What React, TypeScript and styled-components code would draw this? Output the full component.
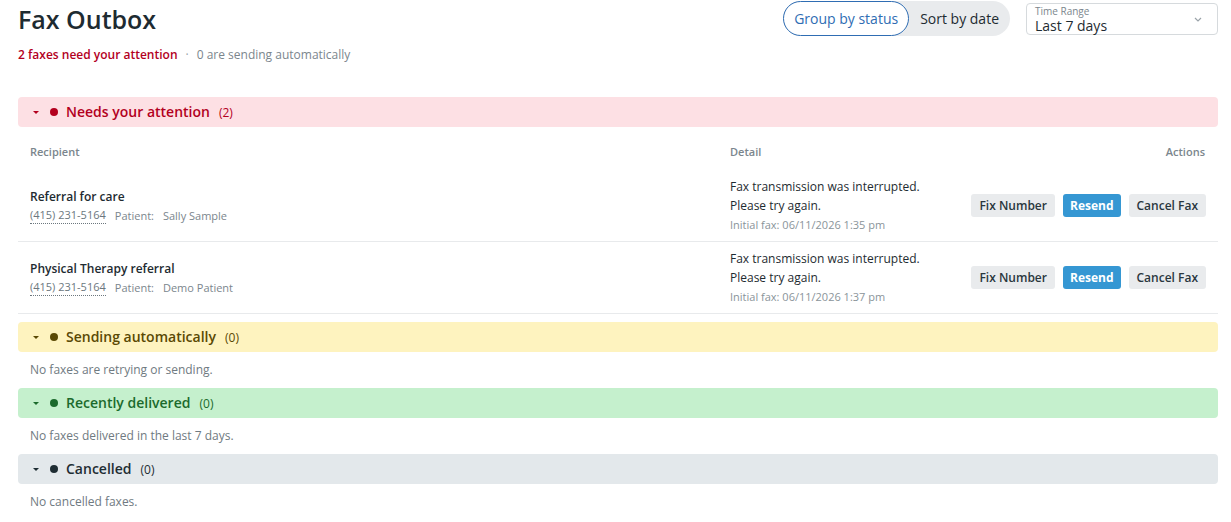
import React from "react";
import styled, { createGlobalStyle } from "styled-components";

const GlobalStyle = createGlobalStyle`
  html, body { margin: 0; padding: 0; background: #ffffff; }
  body { font-family: "Open Sans", "Liberation Sans", sans-serif; color: #1e2b31; }
  * { box-sizing: border-box; }
`;

const Page = styled.div`
  width: 1200px;
  margin-left: 18px;
`;

const Header = styled.header`
  display: flex;
  justify-content: space-between;
  align-items: flex-start;
  margin-bottom: 34px;
`;

const TitleBlock = styled.div`
  display: flex;
  flex-direction: column;
`;

const Title = styled.h1`
  margin: 1px 0 0;
  font-size: 25px;
  line-height: 36px;
  font-weight: 600;
  color: #1e2b31;
`;

const Summary = styled.div`
  margin-top: 10px;
  font-size: 12px;
  line-height: 16px;
  color: #7b868d;
  display: flex;
  align-items: center;
`;

const Alert = styled.span`
  color: #b3001e;
  font-weight: 600;
`;

const Sep = styled.span`
  margin: 0 8px;
  color: #9aa3a9;
`;

const Controls = styled.div`
  display: flex;
  align-items: flex-start;
  gap: 16px;
  padding-top: 2px;
`;

const Toggle = styled.div`
  display: flex;
  height: 35px;
  margin-top: -1px;
  background: #e9ebed;
  border-radius: 18px;
`;

const ToggleOption = styled.button<{ $active?: boolean }>`
  height: 35px;
  padding: 0 10px;
  border-radius: 18px;
  border: 1px solid ${(p) => (p.$active ? "#2f6db3" : "transparent")};
  background: ${(p) => (p.$active ? "#ffffff" : "transparent")};
  color: ${(p) => (p.$active ? "#2f6db3" : "#1e2b31")};
  font-family: inherit;
  font-size: 14px;
  cursor: pointer;
`;

const Select = styled.div`
  width: 192px;
  height: 32px;
  margin-top: 1px;
  border: 1px solid #d6dadd;
  border-radius: 4px;
  padding: 0 8px;
  display: flex;
  align-items: center;
  justify-content: space-between;
`;

const SelectText = styled.div`
  display: flex;
  flex-direction: column;
`;

const SelectLabel = styled.span`
  font-size: 10px;
  line-height: 12px;
  color: #7b868d;
`;

const SelectValue = styled.span`
  font-size: 14px;
  line-height: 17px;
  color: #1e2b31;
`;

const Chevron = styled.svg`
  margin-right: 7px;
`;

const Sections = styled.div`
  display: flex;
  flex-direction: column;
`;

type Tone = "red" | "yellow" | "green" | "gray";

const tones: Record<Tone, { bg: string; fg: string }> = {
  red: { bg: "#fde0e4", fg: "#b3001e" },
  yellow: { bg: "#fef3bf", fg: "#5a4904" },
  green: { bg: "#c5f0cd", fg: "#1b6a2c" },
  gray: { bg: "#e3e8eb", fg: "#1e2d33" },
};

const Banner = styled.div<{ $tone: Tone }>`
  height: 30px;
  border-radius: 4px;
  background: ${(p) => tones[p.$tone].bg};
  color: ${(p) => tones[p.$tone].fg};
  display: flex;
  align-items: center;
  padding-left: 15px;
`;

const Caret = styled.span`
  width: 0;
  height: 0;
  border-left: 3px solid transparent;
  border-right: 3px solid transparent;
  border-top: 3px solid currentColor;
  margin-right: 11px;
`;

const Dot = styled.span`
  width: 8px;
  height: 8px;
  border-radius: 50%;
  background: currentColor;
  margin-right: 8px;
`;

const BannerTitle = styled.span`
  font-size: 14px;
  font-weight: 600;
  line-height: 20px;
`;

const Count = styled.span`
  font-size: 12px;
  margin-left: 9px;
`;

const Table = styled.div`
  margin-bottom: 8px;
`;

const Grid = styled.div<{ $head?: boolean }>`
  display: grid;
  grid-template-columns: 700px 1fr auto;
  align-items: center;
  padding: ${(p) => (p.$head ? "17px 13px 10px 12px" : "7px 12px 7px 12px")};
  border-bottom: ${(p) => (p.$head ? "none" : "1px solid #e8eaec")};
`;

const HeadCell = styled.div<{ $right?: boolean }>`
  font-size: 11px;
  line-height: 16px;
  font-weight: 600;
  color: #7b868d;
  text-align: ${(p) => (p.$right ? "right" : "left")};
`;

const Recipient = styled.div`
  display: flex;
  flex-direction: column;
`;

const RecipientName = styled.div`
  font-size: 12px;
  font-weight: 600;
  line-height: 19px;
  margin-bottom: 2px;
  color: #1e2b31;
`;

const Meta = styled.div`
  display: flex;
  gap: 9px;
  font-size: 11px;
  line-height: 16px;
  color: #7b868d;
`;

const Phone = styled.span`
  color: #6c777e;
  border-bottom: 1px dotted #6c777e;
  line-height: 14px;
`;

const Detail = styled.div`
  display: flex;
  flex-direction: column;
`;

const DetailLine = styled.div`
  font-size: 12px;
  line-height: 19px;
  color: #1e2b31;
`;

const DetailSub = styled.div`
  font-size: 11px;
  line-height: 19px;
  color: #8a949a;
`;

const Actions = styled.div`
  display: flex;
  gap: 8px;
  justify-content: flex-end;
`;

const Button = styled.button<{ $primary?: boolean }>`
  height: 23px;
  padding: 0 ${(p) => (p.$primary ? "7px" : "8px")};
  border: none;
  border-radius: 3px;
  font-family: inherit;
  font-size: 12px;
  font-weight: ${(p) => (p.$primary ? 700 : 600)};
  background: ${(p) => (p.$primary ? "#3597d3" : "#e9ebed")};
  color: ${(p) => (p.$primary ? "#ffffff" : "#2a373e")};
  cursor: pointer;
`;

const Empty = styled.div`
  padding: 10px 12px;
  font-size: 12px;
  line-height: 16px;
  color: #6f7a81;
`;

const rows = [
  { name: "Referral for care", patient: "Sally Sample", time: "1:35 pm" },
  { name: "Physical Therapy referral", patient: "Demo Patient", time: "1:37 pm" },
];

function SectionBanner({ tone, title, count }: { tone: Tone; title: string; count: number }) {
  return (
    <Banner $tone={tone}>
      <Caret />
      <Dot />
      <BannerTitle>{title}</BannerTitle>
      <Count>({count})</Count>
    </Banner>
  );
}

export default function App() {
  return (
    <>
      <GlobalStyle />
      <Page>
        <Header>
          <TitleBlock>
            <Title>Fax Outbox</Title>
            <Summary>
              <Alert>2 faxes need your attention</Alert>
              <Sep>·</Sep>
              <span>0 are sending automatically</span>
            </Summary>
          </TitleBlock>
          <Controls>
            <Toggle>
              <ToggleOption $active>Group by status</ToggleOption>
              <ToggleOption>Sort by date</ToggleOption>
            </Toggle>
            <Select>
              <SelectText>
                <SelectLabel>Time Range</SelectLabel>
                <SelectValue>Last 7 days</SelectValue>
              </SelectText>
              <Chevron width="8" height="5" viewBox="0 0 8 5">
                <path d="M1 1l3 3 3-3" fill="none" stroke="#9aa3a9" strokeWidth="1.2" />
              </Chevron>
            </Select>
          </Controls>
        </Header>

        <Sections>
          <SectionBanner tone="red" title="Needs your attention" count={2} />
          <Table>
            <Grid $head>
              <HeadCell>Recipient</HeadCell>
              <HeadCell>Detail</HeadCell>
              <HeadCell $right>Actions</HeadCell>
            </Grid>
            {rows.map((r) => (
              <Grid key={r.name}>
                <Recipient>
                  <RecipientName>{r.name}</RecipientName>
                  <Meta>
                    <Phone>(415) 231-5164</Phone>
                    <span>Patient:</span>
                    <span>{r.patient}</span>
                  </Meta>
                </Recipient>
                <Detail>
                  <DetailLine>Fax transmission was interrupted.</DetailLine>
                  <DetailLine>Please try again.</DetailLine>
                  <DetailSub>Initial fax: 06/11/2026 {r.time}</DetailSub>
                </Detail>
                <Actions>
                  <Button>Fix Number</Button>
                  <Button $primary>Resend</Button>
                  <Button>Cancel Fax</Button>
                </Actions>
              </Grid>
            ))}
          </Table>

          <SectionBanner tone="yellow" title="Sending automatically" count={0} />
          <Empty>No faxes are retrying or sending.</Empty>

          <SectionBanner tone="green" title="Recently delivered" count={0} />
          <Empty>No faxes delivered in the last 7 days.</Empty>

          <SectionBanner tone="gray" title="Cancelled" count={0} />
          <Empty>No cancelled faxes.</Empty>
        </Sections>
      </Page>
    </>
  );
}
